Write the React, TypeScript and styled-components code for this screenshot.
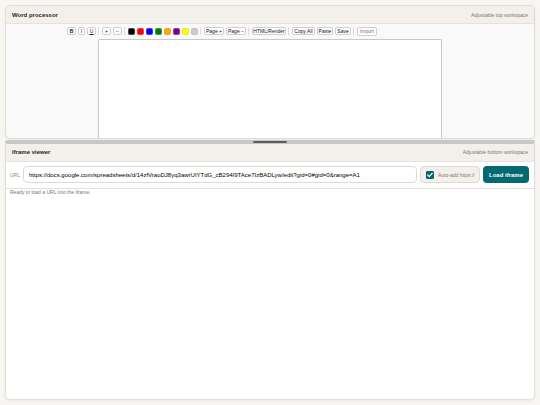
import React, { useState } from "react";
import styled, { createGlobalStyle } from "styled-components";

const GlobalStyle = createGlobalStyle`
  * { box-sizing: border-box; }
  body { margin: 0; background: #f7f6f2; }
  body, button, input { font-family: "Liberation Sans", Arial, sans-serif; }
`;

const Workspace = styled.main`
  display: flex;
  flex-direction: column;
  height: 100vh;
  padding: 5px;
  color: #28251d;
`;

const Panel = styled.section<{ $grow: number; $tone: string }>`
  display: flex;
  flex-direction: column;
  flex: ${(p) => p.$grow} 1 0;
  min-height: 0;
  overflow: hidden;
  background: ${(p) => p.$tone};
  border: 1px solid #e0deda;
  border-radius: 5px;
  box-shadow: 0 1px 3px rgba(40, 37, 29, 0.07);
`;

const LowerPanel = styled(Panel)`
  border-top: 0;
  border-top-left-radius: 0;
  border-top-right-radius: 0;
`;

const PanelHeader = styled.header`
  display: flex;
  flex: none;
  align-items: center;
  justify-content: space-between;
  height: 18px;
  padding: 0 6px;
  background: #f3f0ec;
  border-bottom: 1px solid #e6e3df;
`;

const Title = styled.h2`
  margin: 0;
  font-size: 6px;
  line-height: 8px;
`;

const Hint = styled.span`
  color: #7a7974;
  font-size: 5px;
  line-height: 8px;
`;

const Toolbar = styled.div`
  display: flex;
  flex: none;
  align-items: center;
  justify-content: center;
  gap: 2px;
  height: 15px;
  padding: 0 96px 1px 0;
`;

const ToolButton = styled.button<{ $width: number; $muted?: boolean }>`
  display: flex;
  flex: none;
  align-items: center;
  justify-content: center;
  width: ${(p) => p.$width}px;
  height: ${(p) => (p.$muted ? 9 : 8)}px;
  padding: 0;
  color: ${(p) => (p.$muted ? "#77756f" : "#111")};
  font-size: 5px;
  line-height: 6px;
  white-space: nowrap;
  background: #fff;
  border: 1px solid #cfcfcf;
  border-radius: 2px;
`;

const Swatch = styled.button<{ $color: string }>`
  flex: none;
  width: 7px;
  height: 7px;
  padding: 0;
  background: ${(p) => p.$color};
  border: 1px solid rgba(180, 180, 180, 0.35);
  border-radius: 2px;
`;

const Divider = styled.span`
  flex: none;
  width: 1px;
  height: 8px;
  margin-right: 1px;
  background: #ddd;
`;

const Page = styled.div`
  flex: 1;
  width: 65%;
  margin: 0 auto;
  background: #fff;
  border: 1px solid #c8c8c8;
  border-bottom: 0;
  border-radius: 2px 2px 0 0;
  outline: 0;
`;

const Splitter = styled.div`
  display: flex;
  flex: none;
  align-items: center;
  justify-content: center;
  height: 4px;
  margin-top: 1px;
  background: #c8c8c8;
  border-radius: 2px;
`;

const Grip = styled.span`
  width: 34px;
  height: 2px;
  background: #5c5c5c;
  border-radius: 1px;
`;

const UrlForm = styled.form`
  display: flex;
  flex: none;
  align-items: center;
  gap: 3px;
  height: 27px;
  padding: 0 5px 0 4px;
  border-bottom: 1px solid #e4e2de;
`;

const FieldLabel = styled.label`
  color: #8a8984;
  font-size: 5px;
`;

const UrlInput = styled.input`
  flex: 1;
  min-width: 0;
  height: 17px;
  padding: 0 5px;
  color: #000;
  font-size: 6px;
  background: #fff;
  border: 1px solid #dddad6;
  border-radius: 4px;
`;

const CheckLabel = styled.label`
  display: flex;
  align-items: center;
  gap: 4px;
  width: 60px;
  height: 17px;
  padding-left: 5px;
  color: #7a7974;
  font-size: 5px;
  white-space: nowrap;
  background: #f3f0ec;
  border: 1px solid #dddad6;
  border-radius: 4px;
`;

const Checkbox = styled.input`
  display: grid;
  flex: none;
  place-items: center;
  appearance: none;
  width: 8px;
  height: 8px;
  margin: 0;
  background: #fff;
  border: 1px solid #01696f;
  border-radius: 1px;
  &:checked { background: #01696f; }
  &:checked::before {
    content: "";
    width: 6px;
    height: 6px;
    background: #fff;
    clip-path: polygon(0 52%, 15% 38%, 38% 62%, 86% 8%, 100% 22%, 38% 92%);
  }
`;

const LoadButton = styled.button`
  width: 46px;
  height: 17px;
  padding: 0;
  color: #fff;
  font-size: 6px;
  font-weight: 700;
  background: #01696f;
  border: 0;
  border-radius: 4px;
`;

const Status = styled.p`
  margin: 0;
  padding: 0 4px;
  color: #7a7974;
  font-size: 5px;
  line-height: 7px;
`;

const Frame = styled.iframe`
  flex: 1;
  width: 100%;
  min-height: 0;
  border: 0;
`;

const colors = ["black", "red", "blue", "green", "orange", "purple", "yellow", "#ccc"];

export default function App() {
  const [url, setUrl] = useState(
    "https://docs.google.com/spreadsheets/d/14zfVraoDJ8yq3awrUIYTdG_cB294I9TAce7IzBADLyw/edit?gid=0#gid=0&range=A1"
  );
  const [autoAdd, setAutoAdd] = useState(true);

  return (
    <>
      <GlobalStyle />
      <Workspace>
        <Panel $grow={133} $tone="#f9f9f9">
          <PanelHeader>
            <Title>Word processor</Title>
            <Hint>Adjustable top workspace</Hint>
          </PanelHeader>
          <Toolbar role="toolbar" aria-label="Formatting">
            <ToolButton $width={9}><b>B</b></ToolButton>
            <ToolButton $width={7}><i>I</i></ToolButton>
            <ToolButton $width={9}><u>U</u></ToolButton>
            <Divider />
            <ToolButton $width={9}>+</ToolButton>
            <ToolButton $width={9}>−</ToolButton>
            <Divider />
            {colors.map((c) => <Swatch key={c} $color={c} aria-label={`Text color ${c}`} />)}
            <Divider />
            <ToolButton $width={20}>Page +</ToolButton>
            <ToolButton $width={20}>Page −</ToolButton>
            <Divider />
            <ToolButton $width={34}>HTML/Render</ToolButton>
            <Divider />
            <ToolButton $width={23}>Copy All</ToolButton>
            <ToolButton $width={16}>Paste</ToolButton>
            <ToolButton $width={16}>Save</ToolButton>
            <Divider />
            <ToolButton $width={20} $muted>Import</ToolButton>
          </Toolbar>
          <Page contentEditable suppressContentEditableWarning role="textbox" aria-label="Document" />
        </Panel>
        <Splitter role="separator" aria-orientation="horizontal"><Grip /></Splitter>
        <LowerPanel $grow={257} $tone="#fff">
          <PanelHeader>
            <Title>Iframe viewer</Title>
            <Hint>Adjustable bottom workspace</Hint>
          </PanelHeader>
          <UrlForm onSubmit={(e) => e.preventDefault()}>
            <FieldLabel htmlFor="url">URL</FieldLabel>
            <UrlInput id="url" value={url} onChange={(e) => setUrl(e.target.value)} />
            <CheckLabel>
              <Checkbox type="checkbox" checked={autoAdd} onChange={(e) => setAutoAdd(e.target.checked)} />
              Auto-add https://
            </CheckLabel>
            <LoadButton type="submit">Load iframe</LoadButton>
          </UrlForm>
          <Status>Ready to load a URL into the iframe.</Status>
          <Frame title="Iframe viewer" />
        </LowerPanel>
      </Workspace>
    </>
  );
}
